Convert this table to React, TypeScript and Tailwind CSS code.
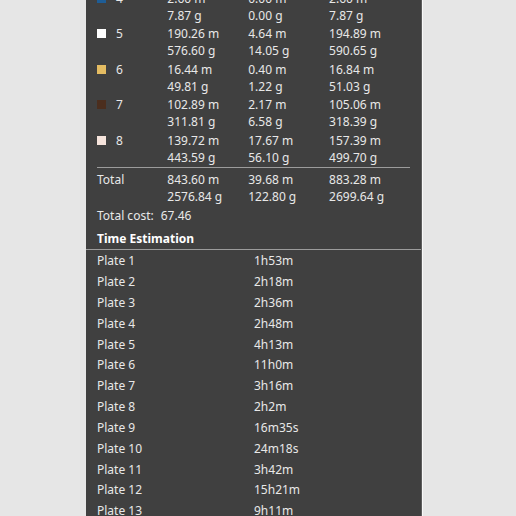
const filaments = [
  { id: "4", color: "bg-[#1e5d96]", model: ["2.60 m", "7.87 g"], flush: ["0.00 m", "0.00 g"], total: ["2.60 m", "7.87 g"] },
  { id: "5", color: "bg-[#ffffff]", model: ["190.26 m", "576.60 g"], flush: ["4.64 m", "14.05 g"], total: ["194.89 m", "590.65 g"] },
  { id: "6", color: "bg-[#e4bc62]", model: ["16.44 m", "49.81 g"], flush: ["0.40 m", "1.22 g"], total: ["16.84 m", "51.03 g"] },
  { id: "7", color: "bg-[#4b2e1e]", model: ["102.89 m", "311.81 g"], flush: ["2.17 m", "6.58 g"], total: ["105.06 m", "318.39 g"] },
  { id: "8", color: "bg-[#f6e4dc]", model: ["139.72 m", "443.59 g"], flush: ["17.67 m", "56.10 g"], total: ["157.39 m", "499.70 g"] },
];

const plates = [
  ["Plate 1", "1h53m"],
  ["Plate 2", "2h18m"],
  ["Plate 3", "2h36m"],
  ["Plate 4", "2h48m"],
  ["Plate 5", "4h13m"],
  ["Plate 6", "11h0m"],
  ["Plate 7", "3h16m"],
  ["Plate 8", "2h2m"],
  ["Plate 9", "16m35s"],
  ["Plate 10", "24m18s"],
  ["Plate 11", "3h42m"],
  ["Plate 12", "15h21m"],
  ["Plate 13", "9h11m"],
];

const Pair = ({ v }: { v: string[] }) => (
  <div className="w-[84px] flex flex-col">
    <span>{v[0]}</span>
    <span>{v[1]}</span>
  </div>
);

export default function App() {
  return (
    <div className="w-[516px] h-[516px] bg-[#e6e6e6] flex overflow-hidden">
      <div
        className="ml-[86px] w-[336px] h-full bg-[#404040] overflow-hidden border-r border-[#5e5e5e] shadow-[1px_0_0_#f8f8f8] text-[#e8e8e8] text-[12px] leading-[17px]"
        style={{ fontFamily: '"Noto Sans", Inter, sans-serif' }}
      >
        <div className="mt-[-12px] px-[11px] flex flex-col">
          {filaments.map((f) => (
            <div key={f.id} className="flex pt-[1.5px] pb-[0.5px] h-[35.67px]">
              <div className="w-[73px] flex items-start">
                <span className={`mt-[4px] w-[9px] h-[9px] ${f.color}`} />
                <span className="ml-[10px]">{f.id}</span>
              </div>
              <Pair v={f.model} />
              <Pair v={f.flush} />
              <Pair v={f.total} />
            </div>
          ))}
          <div className="mt-[1px] h-px bg-[#9c9c9c]" />
          <div className="flex mt-[2.5px]">
            <div className="w-[73px]">Total</div>
            <Pair v={["843.60 m", "2576.84 g"]} />
            <Pair v={["39.68 m", "122.80 g"]} />
            <Pair v={["883.28 m", "2699.64 g"]} />
          </div>
          <div className="mt-[2.5px] flex gap-[7px]">
            <span>Total cost:</span>
            <span>67.46</span>
          </div>
          <div className="mt-[6px] font-bold text-white">Time Estimation</div>
        </div>
        <div className="mt-[2px] h-px bg-[#9c9c9c]" />
        <div className="px-[11px] flex flex-col">
          {plates.map(([p, t]) => (
            <div key={p} className="flex h-[20.85px] items-center">
              <span className="w-[157px]">{p}</span>
              <span>{t}</span>
            </div>
          ))}
        </div>
      </div>
    </div>
  );
}
